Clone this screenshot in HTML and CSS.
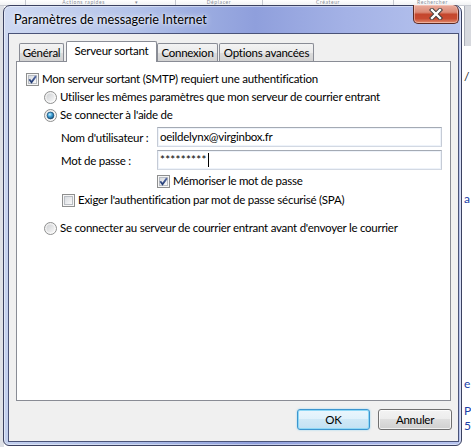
FILE: index.html
```html
<!DOCTYPE html>
<html lang="fr">
<head>
<meta charset="utf-8">
<title>Paramètres de messagerie Internet</title>
<link rel="stylesheet" href="styles.css">
</head>
<body>
<svg class="defs" width="0" height="0" aria-hidden="true">
  <defs>
    <linearGradient id="cbin" x1="0" y1="0" x2="1" y2="1">
      <stop offset="0" stop-color="#d6d9de"/>
      <stop offset="1" stop-color="#fbfbfb"/>
    </linearGradient>
    <linearGradient id="rdout" x1="0" y1="0" x2="1" y2="1">
      <stop offset="0" stop-color="#e9e9e9"/>
      <stop offset="1" stop-color="#ffffff"/>
    </linearGradient>
    <linearGradient id="rdin" x1="0" y1="0" x2="1" y2="1">
      <stop offset="0" stop-color="#cfd1d4"/>
      <stop offset="1" stop-color="#f7f7f7"/>
    </linearGradient>
    <radialGradient id="rddot" cx="0.4" cy="0.35" r="0.7">
      <stop offset="0" stop-color="#c9f1ff"/>
      <stop offset="0.45" stop-color="#3fa2d9"/>
      <stop offset="1" stop-color="#0f4772"/>
    </radialGradient>
    <linearGradient id="chk" x1="0" y1="0" x2="0" y2="1">
      <stop offset="0" stop-color="#5a6ea8"/>
      <stop offset="1" stop-color="#213a73"/>
    </linearGradient>
  </defs>
</svg>

<div class="desktop">
  <div class="bg-header">
    <div class="hcol h0"></div>
    <div class="hcol h1"><span>Actions rapides</span><span class="arrow">▾</span></div>
    <div class="hcol h2"><span>Déplacer</span></div>
    <div class="hcol h3"><span>Créateur</span></div>
    <div class="hcol h4"><span>Rechercher</span></div>
  </div>
  <div class="bg-left"></div>
  <div class="bg-right">
    <div class="rtop"></div>
    <span class="rl l1">/</span>
    <span class="rl l2">a</span>
    <span class="rl l3">e</span>
    <span class="rl l4">P</span>
    <span class="rl l5">5</span>
  </div>

  <div class="window">
    <div class="titlebar">
      <span class="title">Paramètres de messagerie Internet</span>
      <div class="close">
        <svg width="14" height="12" viewBox="0 0 14 12" aria-hidden="true">
          <path d="M3 2 L11 10 M11 2 L3 10" stroke="#3a3a3a" stroke-width="4.2" stroke-linecap="square" fill="none"/>
          <path d="M3 2 L11 10 M11 2 L3 10" stroke="#ffffff" stroke-width="2.4" stroke-linecap="square" fill="none"/>
        </svg>
      </div>
    </div>

    <div class="client">
      <div class="tabs">
        <div class="tab t-gen">Général</div>
        <div class="tab active t-srv">Serveur sortant</div>
        <div class="tab t-cnx">Connexion</div>
        <div class="tab t-opt">Options avancées</div>
      </div>

      <div class="pane">
        <div class="row r-auth">
          <svg class="cb" width="13" height="13" viewBox="0 0 13 13"><rect x="0.5" y="0.5" width="12" height="12" fill="#f6f6f6" stroke="#8e8f8f"/><rect x="2.5" y="2.5" width="8" height="8" fill="url(#cbin)" stroke="#b9bdc3"/><path d="M3.3 6.3 L5.5 9.2 L9.9 3.1" fill="none" stroke="url(#chk)" stroke-width="1.9"/></svg>
          <span>Mon serveur sortant (SMTP) requiert une authentification</span>
        </div>
        <div class="row r-same">
          <svg class="rd" width="13" height="13" viewBox="0 0 13 13"><circle cx="6.5" cy="6.5" r="6" fill="url(#rdout)" stroke="#8e8f8f"/><circle cx="6.5" cy="6.5" r="4" fill="url(#rdin)"/></svg>
          <span>Utiliser les mêmes paramètres que mon serveur de courrier entrant</span>
        </div>
        <div class="row r-connect">
          <svg class="rd" width="13" height="13" viewBox="0 0 13 13"><circle cx="6.5" cy="6.5" r="6" fill="url(#rdout)" stroke="#8e8f8f"/><circle cx="6.5" cy="6.5" r="4" fill="url(#rdin)"/><circle cx="6.5" cy="6.5" r="3.4" fill="url(#rddot)" stroke="#1d4f74" stroke-width="0.7"/></svg>
          <span>Se connecter à l'aide de</span>
        </div>

        <div class="field f-user">
          <span class="flabel">Nom d'utilisateur :</span>
          <div class="input">oeildelynx@virginbox.fr</div>
        </div>
        <div class="field f-pass">
          <span class="flabel">Mot de passe :</span>
          <div class="input pass">*********<span class="caret"></span></div>
        </div>

        <div class="row r-mem">
          <svg class="cb" width="13" height="13" viewBox="0 0 13 13"><rect x="0.5" y="0.5" width="12" height="12" fill="#f6f6f6" stroke="#8e8f8f"/><rect x="2.5" y="2.5" width="8" height="8" fill="url(#cbin)" stroke="#b9bdc3"/><path d="M3.3 6.3 L5.5 9.2 L9.9 3.1" fill="none" stroke="url(#chk)" stroke-width="1.9"/></svg>
          <span>Mémoriser le mot de passe</span>
        </div>
        <div class="row r-spa">
          <svg class="cb" width="13" height="13" viewBox="0 0 13 13"><rect x="0.5" y="0.5" width="12" height="12" fill="#f6f6f6" stroke="#8e8f8f"/><rect x="2.5" y="2.5" width="8" height="8" fill="url(#cbin)" stroke="#b9bdc3"/></svg>
          <span>Exiger l'authentification par mot de passe sécurisé (SPA)</span>
        </div>
        <div class="row r-before">
          <svg class="rd" width="13" height="13" viewBox="0 0 13 13"><circle cx="6.5" cy="6.5" r="6" fill="url(#rdout)" stroke="#8e8f8f"/><circle cx="6.5" cy="6.5" r="4" fill="url(#rdin)"/></svg>
          <span>Se connecter au serveur de courrier entrant avant d'envoyer le courrier</span>
        </div>
      </div>

      <div class="buttons">
        <button class="btn ok">OK</button>
        <button class="btn">Annuler</button>
      </div>
    </div>
  </div>
</div>
</body>
</html>
```

FILE: styles.css
```css
* { box-sizing: border-box; }

html, body {
  margin: 0;
  padding: 0;
}

body {
  width: 471px;
  height: 447px;
  overflow: hidden;
  font-family: Lato, "Liberation Sans", sans-serif;
  font-size: 11.5px;
  letter-spacing: -0.25px;
  color: #000;
  background: #ffffff;
}

.defs {
  position: absolute;
  width: 0;
  height: 0;
  overflow: hidden;
}

.desktop {
  position: relative;
  width: 471px;
  height: 447px;
  overflow: hidden;
  background: #ffffff;
}

/* background application behind the dialog */
.bg-header {
  position: absolute;
  left: 0;
  top: 0;
  width: 471px;
  height: 6px;
  display: flex;
  background: linear-gradient(#ffffff, #f1f2f4);
  border-bottom: 1px solid #c7cad1;
}

.hcol {
  height: 5px;
  display: flex;
  align-items: flex-end;
  justify-content: center;
  border-right: 1px solid #c5c8cf;
  color: #8a8e98;
  line-height: 5px;
  font-size: 5px;
  letter-spacing: 0.6px;
  gap: 30px;
}

.h0 { width: 26px; }
.h1 { width: 150px; }
.h2 { width: 87px; }
.h3 { width: 131px; }
.h4 { flex: 1; border-right: none; }

.bg-left {
  position: absolute;
  left: 0;
  top: 6px;
  width: 4px;
  height: 441px;
  background: #dfe1e6;
}

.bg-right {
  position: absolute;
  left: 461px;
  top: 6px;
  width: 10px;
  height: 441px;
  background: #ffffff;
}

.rtop {
  position: absolute;
  left: 3px;
  top: 0;
  width: 7px;
  height: 40px;
  background: #d7d9de;
  border-left: 1px solid #a9adb7;
}

.rl {
  position: absolute;
  left: 3px;
  color: #2040a8;
  font-size: 12px;
  line-height: 14px;
}
.l1 { top: 64px; color: #222; }
.l2 { top: 186px; }
.l3 { top: 371px; }
.l4 { top: 398px; }
.l5 { top: 413px; }

/* dialog window */
.window {
  position: absolute;
  left: 3px;
  top: 5px;
  width: 459px;
  height: 441px;
  border: 1px solid #3b4160;
  border-radius: 7px 7px 6px 6px;
  padding: 0 2px 3px 4px;
  background:
    linear-gradient(100deg, rgba(255,255,255,0.35) 0%, rgba(255,255,255,0) 35%),
    linear-gradient(90deg, #b4c4ea 0%, #aabbe6 30%, #8f9fdc 55%, #a4b2e6 75%, #b7c4ee 100%);
  box-shadow: inset 0 0 0 1px rgba(255,255,255,0.45);
}

.titlebar {
  height: 27px;
  display: flex;
  align-items: flex-start;
}

.title {
  padding-left: 6px;
  margin-top: 5px;
  font-size: 12.7px;
  letter-spacing: 0;
  line-height: 16px;
  color: #000;
  text-shadow: 0 0 6px rgba(255,255,255,0.95), 0 0 3px rgba(255,255,255,0.8);
}

.close {
  margin-left: auto;
  margin-top: -1px;
  width: 46px;
  height: 19px;
  display: flex;
  align-items: center;
  justify-content: center;
  border: 1px solid #5a2a24;
  border-top: none;
  border-radius: 0 6px 5px 5px;
  background: linear-gradient(#e9ab9c 0%, #db8a76 40%, #c4462d 52%, #c84a31 75%, #e08b6d 100%);
  box-shadow: inset 0 0 0 1px rgba(255,220,210,0.5);
}

/* client area */
.client {
  height: 409px;
  border: 1px solid #4a5378;
  background: #f0f0f0;
  display: flex;
  flex-direction: column;
}

.tabs {
  height: 27px;
  display: flex;
  align-items: flex-end;
  padding-left: 10px;
  position: relative;
  z-index: 2;
}

.tab {
  height: 18px;
  border: 1px solid #898c95;
  border-bottom: none;
  border-radius: 2px 2px 0 0;
  background: linear-gradient(#f3f3f3 0%, #ebebeb 50%, #dddddd 50%, #d2d2d2 100%);
  display: flex;
  align-items: center;
  justify-content: center;
  white-space: nowrap;
  line-height: 14px;
  padding-top: 1px;
}

.t-gen { width: 45px; }
.t-srv { width: 91px; margin-left: 2px; }
.t-cnx { width: 61px; }
.t-opt { width: 95px; margin-left: 1px; }

.tab.active {
  height: 21px;
  margin-bottom: -1px;
  background: #ffffff;
  align-items: flex-start;
  padding-top: 2px;
}

.pane {
  margin: 0 7px;
  height: 340px;
  background: #ffffff;
  border: 1px solid #898c95;
  display: flex;
  flex-direction: column;
  align-items: flex-start;
}

.row {
  display: flex;
  align-items: center;
  height: 18px;
  gap: 3px;
  white-space: nowrap;
  line-height: 14px;
}

.cb, .rd { flex: none; display: block; }

.r-auth { margin-top: 8px; margin-left: 9px; }
.r-same { margin-top: 0; margin-left: 27px; }
.r-connect { margin-top: 0; margin-left: 27px; }
.r-mem { margin-top: 2px; margin-left: 140px; }
.r-spa { margin-top: 1px; margin-left: 45px; }
.r-before { margin-top: 10px; margin-left: 27px; }

.field {
  display: flex;
  align-items: center;
  margin-left: 44px;
  height: 20px;
}

.f-user { margin-top: 3px; }
.f-pass { margin-top: 3px; }

.flabel {
  width: 96px;
  white-space: nowrap;
}

.input {
  width: 285px;
  height: 20px;
  border: 1px solid #abadb3;
  border-color: #a4aab4 #c5cbd6 #d3d9e3 #c5cbd6;
  background: #ffffff;
  padding: 0 0 0 2px;
  display: flex;
  align-items: center;
  line-height: 14px;
  box-shadow: inset 0 0 0 1px #eef3fa;
}

.pass {
  letter-spacing: 0.3px;
}

.caret {
  display: inline-block;
  width: 1px;
  height: 14px;
  background: #000;
  margin-left: 1px;
}

.buttons {
  display: flex;
  justify-content: flex-end;
  gap: 8px;
  padding-right: 6px;
  margin-top: 8px;
}

.btn {
  width: 74px;
  height: 21px;
  font-family: Lato, "Liberation Sans", sans-serif;
  font-size: 11.5px;
  letter-spacing: -0.25px;
  color: #000;
  border: 1px solid #707070;
  border-radius: 3px;
  background: linear-gradient(#f3f3f3 0%, #ececec 50%, #dedede 50%, #d0d0d0 100%);
  box-shadow: inset 0 0 0 1px rgba(255,255,255,0.7);
  padding: 0;
  line-height: 14px;
}

.btn.ok {
  width: 73px;
  border-color: #3c95cf;
  background: linear-gradient(#eaf6fd 0%, #dff1fb 50%, #cfe8f6 50%, #c2e1f3 100%);
  box-shadow: inset 0 0 0 1px #8fd8f6, 0 0 2px rgba(80,190,240,0.6);
}
```
